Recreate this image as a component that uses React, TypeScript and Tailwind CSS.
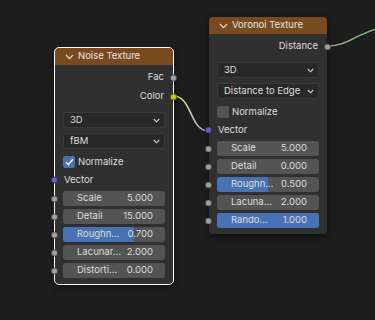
import React from "react";

const font = { fontFamily: "Inter, 'DejaVu Sans', sans-serif" };

function Socket({ color, side }: { color: string; side: "left" | "right" }) {
  return (
    <span
      className={`absolute top-1/2 h-[7px] w-[7px] -translate-y-1/2 rounded-full border border-black/50 ${
        side === "left" ? "left-[-4px]" : "right-[-4px]"
      }`}
      style={{ backgroundColor: color }}
    />
  );
}

function Chevron({ className = "" }: { className?: string }) {
  return (
    <svg width="7" height="5" viewBox="0 0 7 5" className={className}>
      <path d="M0.8 1 L3.5 3.8 L6.2 1" fill="none" stroke="#d0d0d0" strokeWidth="1.1" />
    </svg>
  );
}

function Header({ title }: { title: string }) {
  return (
    <div className="flex h-[17px] items-center gap-[4px] rounded-t-[4px] bg-[#7a4a1f] pl-[10px] text-[#e4e4e4]">
      <svg width="9" height="6" viewBox="0 0 9 6">
        <path d="M1 1 L4.5 4.6 L8 1" fill="none" stroke="#e0e0e0" strokeWidth="1.1" />
      </svg>
      <span>{title}</span>
    </div>
  );
}

function Output({ label, color }: { label: string; color: string }) {
  return (
    <div className="relative flex h-[19px] items-center justify-end pr-[9px]">
      <span>{label}</span>
      <Socket color={color} side="right" />
    </div>
  );
}

function Dropdown({ label }: { label: string }) {
  return (
    <div className="px-[8px]">
      <div className="flex h-[16px] items-center justify-between rounded-[3px] border border-[#3a3a3a] bg-[#282828] pl-[6px] pr-[4px]">
        <span>{label}</span>
        <Chevron />
      </div>
    </div>
  );
}

function Checkbox({ checked }: { checked: boolean }) {
  return (
    <div className="mt-[4px] flex h-[18px] items-center gap-[3px] px-[8px]">
      <span
        className={`flex h-[12px] w-[12px] items-center justify-center rounded-[2px] ${
          checked ? "bg-[#4772b3]" : "bg-[#545454]"
        }`}
      >
        {checked && (
          <svg width="9" height="8" viewBox="0 0 9 8">
            <path d="M1 4.2 L3.4 6.6 L8 1.2" fill="none" stroke="#ffffff" strokeWidth="1.5" />
          </svg>
        )}
      </span>
      <span>Normalize</span>
    </div>
  );
}

function Input({ label }: { label: string }) {
  return (
    <div className="relative flex h-[18px] items-center pl-[9px]">
      <Socket color="#6363c7" side="left" />
      <span>{label}</span>
    </div>
  );
}

function Slider({ label, value, fill = 0 }: { label: string; value: string; fill?: number }) {
  return (
    <div className="relative px-[8px]">
      <Socket color="#a1a1a1" side="left" />
      <div className="relative h-[15px] overflow-hidden rounded-[3px] bg-[#545454]">
        {fill > 0 && (
          <div className="absolute inset-y-0 left-0 bg-[#4772b3]" style={{ width: `${fill * 100}%` }} />
        )}
        <div className="relative flex h-full items-center justify-between pl-[14px] pr-[12px]">
          <span>{label}</span>
          <span>{value}</span>
        </div>
      </div>
    </div>
  );
}

export default function App() {
  return (
    <div
      className="relative h-[320px] w-[375px] overflow-hidden whitespace-nowrap bg-[#1d1d1d] bg-[radial-gradient(circle,#232323_0.8px,transparent_1px)] bg-[size:20px_20px] text-[9.5px] text-[#dedede]"
      style={font}
    >
      <svg className="absolute inset-0" width="375" height="320">
        <defs>
          <linearGradient id="l1" x1="173" y1="0" x2="208" y2="0" gradientUnits="userSpaceOnUse">
            <stop offset="0" stopColor="#d6d64a" />
            <stop offset="0.5" stopColor="#d8d8b8" />
            <stop offset="1" stopColor="#8a8ad8" />
          </linearGradient>
          <linearGradient id="l2" x1="327" y1="0" x2="390" y2="0" gradientUnits="userSpaceOnUse">
            <stop offset="0" stopColor="#a0a0a0" />
            <stop offset="1" stopColor="#4cc24c" />
          </linearGradient>
        </defs>
        <path d="M173.5 96 C 192 96, 190 131, 208 131" fill="none" stroke="#111" strokeWidth="3" />
        <path d="M173.5 96 C 192 96, 190 131, 208 131" fill="none" stroke="url(#l1)" strokeWidth="1.6" />
        <path d="M327 46 C 352 46, 355 30, 400 24" fill="none" stroke="#111" strokeWidth="3" />
        <path d="M327 46 C 352 46, 355 30, 400 24" fill="none" stroke="url(#l2)" strokeWidth="1.6" />
      </svg>

      <div className="absolute left-[55px] top-[48px] w-[118px] rounded-[4px] bg-[#303030] pb-[6px] shadow-[0_2px_6px_rgba(0,0,0,0.5)] outline outline-1 outline-white">
        <Header title="Noise Texture" />
        <div className="mt-[3px]">
          <Output label="Fac" color="#a1a1a1" />
          <Output label="Color" color="#c7c729" />
        </div>
        <div className="mt-[6px] flex flex-col gap-[5px]">
          <Dropdown label="3D" />
          <Dropdown label="fBM" />
        </div>
        <Checkbox checked />
        <Input label="Vector" />
        <div className="mt-[2px] flex flex-col gap-[3px]">
          <Slider label="Scale" value="5.000" />
          <Slider label="Detail" value="15.000" />
          <Slider label="Roughn..." value="0.700" fill={0.7} />
          <Slider label="Lacunar..." value="2.000" />
          <Slider label="Distorti..." value="0.000" />
        </div>
      </div>

      <div className="absolute left-[209px] top-[17px] w-[118px] rounded-[4px] bg-[#303030] pb-[6px] shadow-[0_2px_6px_rgba(0,0,0,0.6)]">
        <Header title="Voronoi Texture" />
        <div className="mt-[3px]">
          <Output label="Distance" color="#a1a1a1" />
        </div>
        <div className="mt-[6px] flex flex-col gap-[5px]">
          <Dropdown label="3D" />
          <Dropdown label="Distance to Edge" />
        </div>
        <Checkbox checked={false} />
        <Input label="Vector" />
        <div className="mt-[2px] flex flex-col gap-[3px]">
          <Slider label="Scale" value="5.000" />
          <Slider label="Detail" value="0.000" />
          <Slider label="Roughn..." value="0.500" fill={0.5} />
          <Slider label="Lacuna..." value="2.000" />
          <Slider label="Rando..." value="1.000" fill={1} />
        </div>
      </div>
    </div>
  );
}
